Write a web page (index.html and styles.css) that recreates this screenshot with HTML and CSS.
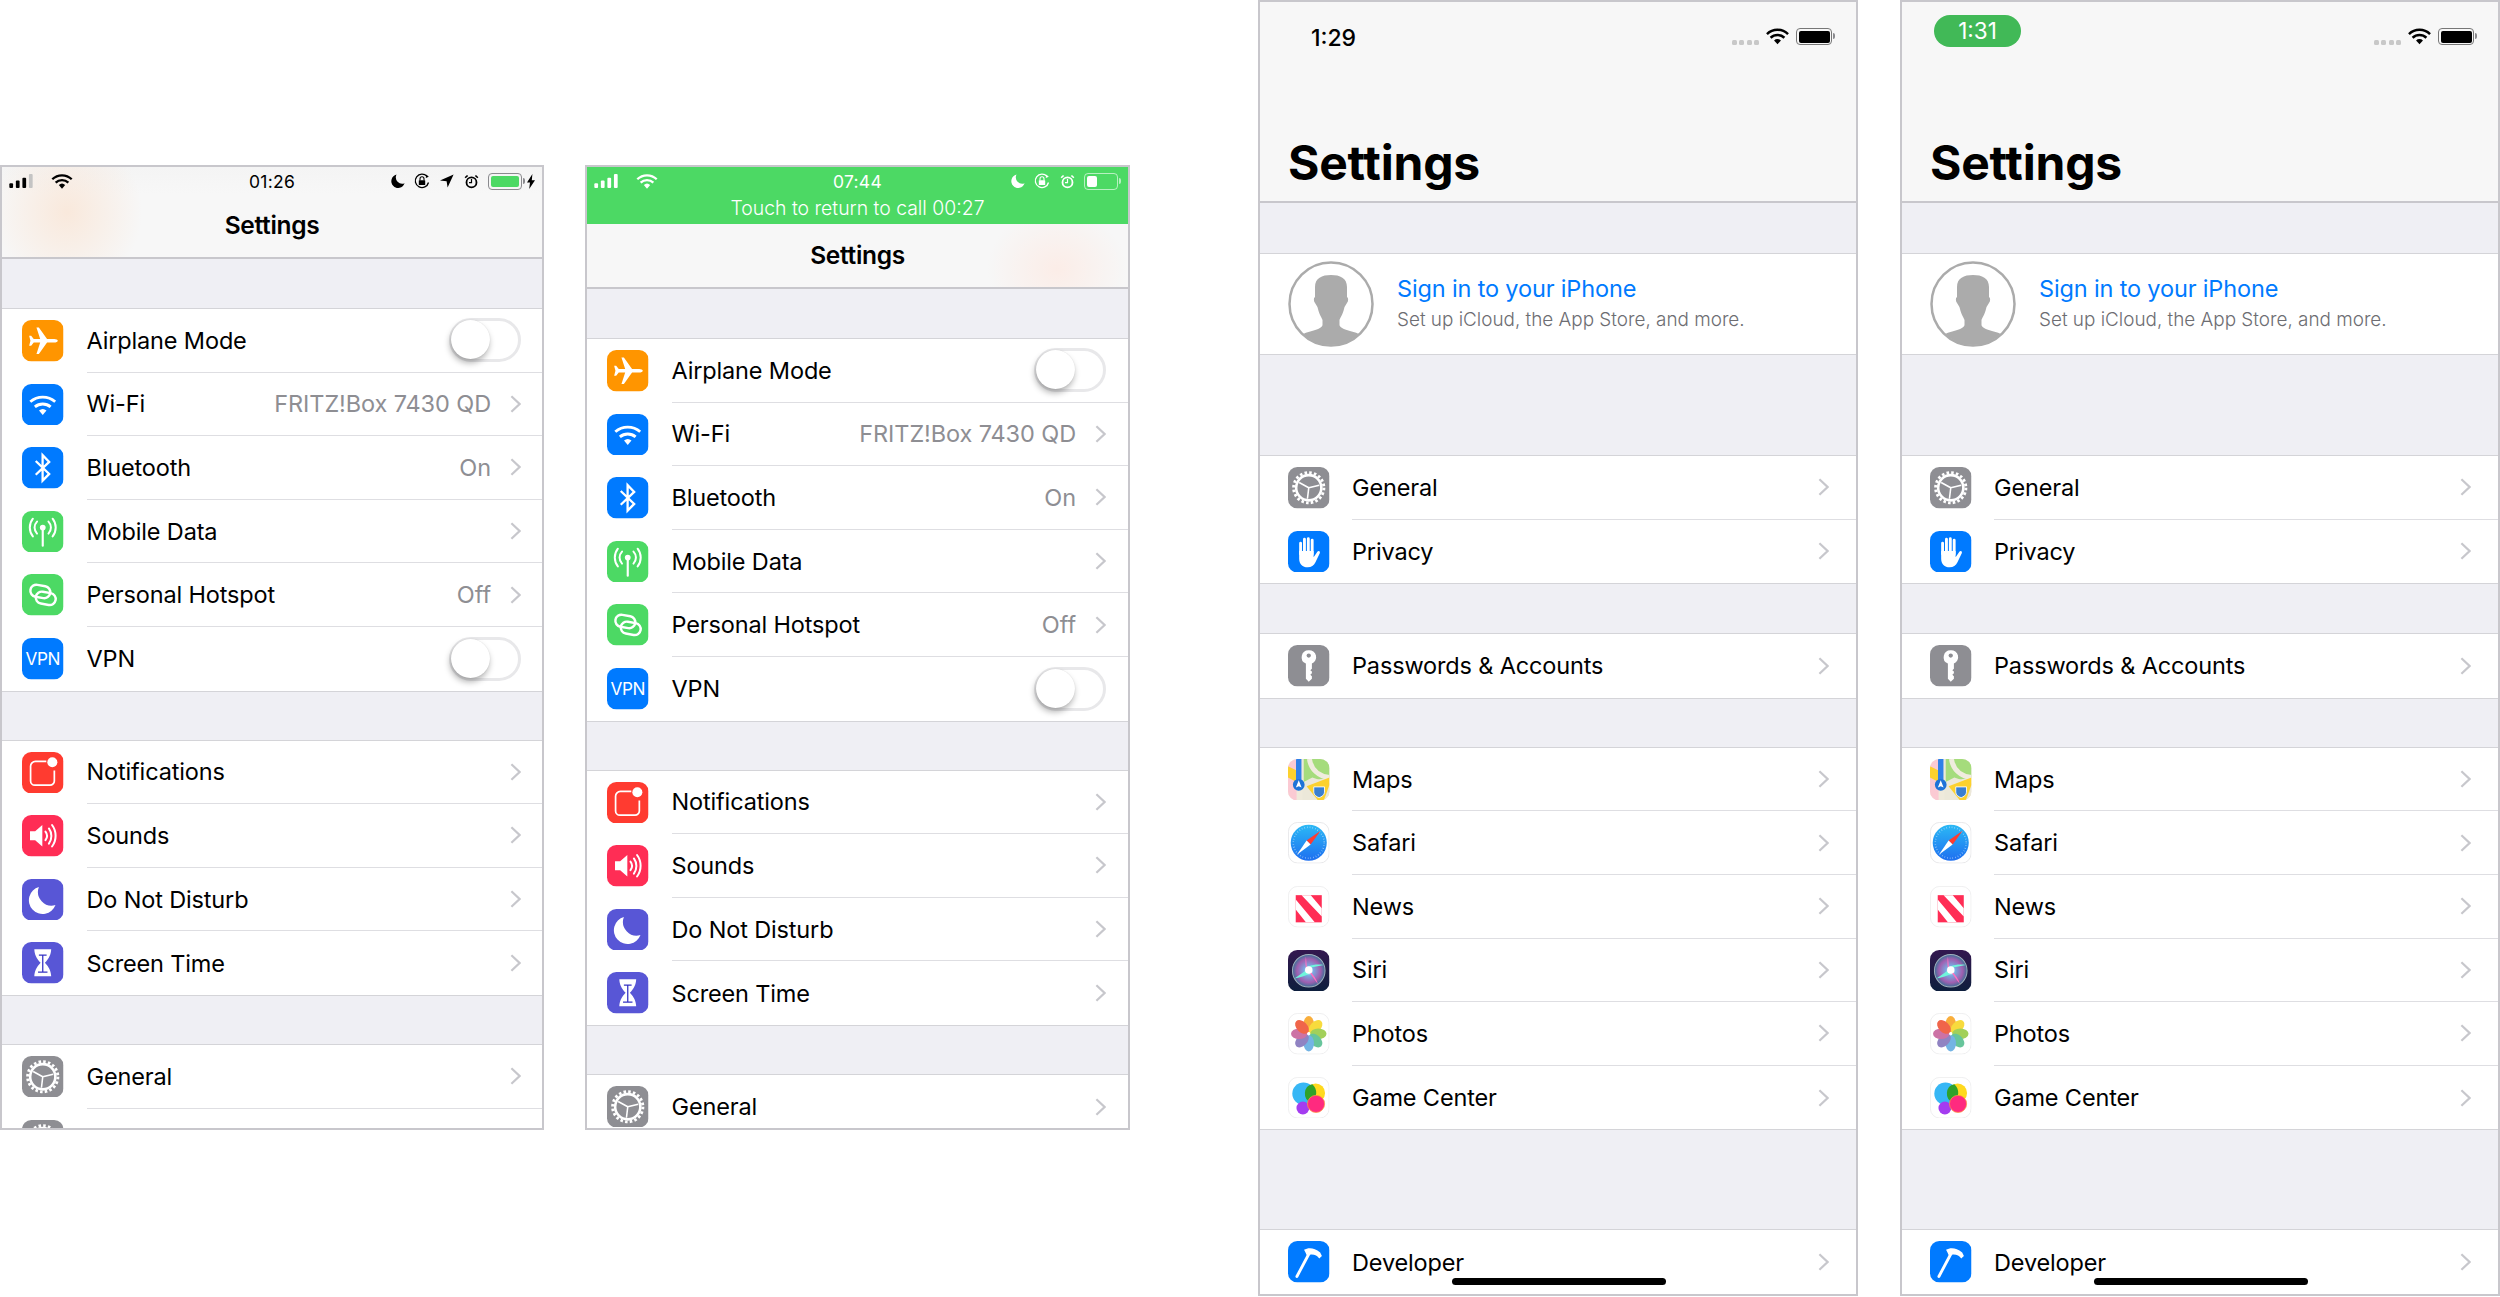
FILE: index.html
```html
<!DOCTYPE html>
<html lang="en">
<head>
    <meta charset="UTF-8">
    <title>iOS Settings screens</title>
    <link rel="stylesheet" href="styles.css">
</head>
<body>
    <svg class="sprites" xmlns="http://www.w3.org/2000/svg">
        <defs>
            <linearGradient id="safariBlue" x1="0" y1="0" x2="0" y2="1">
                <stop offset="0" stop-color="#2bb9f5"/><stop offset="1" stop-color="#1e6ff0"/>
            </linearGradient>
            <radialGradient id="siriGlow" cx="0.5" cy="0.5" r="0.5">
                <stop offset="0" stop-color="#f0fffb"/><stop offset="0.3" stop-color="#7aa8e0"/><stop offset="0.72" stop-color="#a05fb0"/><stop offset="1" stop-color="#3c6f96"/>
            </radialGradient>
            <linearGradient id="siriBg" x1="0" y1="0" x2="0" y2="1">
                <stop offset="0" stop-color="#33174f"/><stop offset="1" stop-color="#0d1f3d"/>
            </linearGradient>
            <clipPath id="tileClip"><rect width="29" height="29" rx="6.5"/></clipPath>
            <clipPath id="avatarClip"><circle cx="43" cy="43" r="41"/></clipPath>
        </defs>

        <!-- status bar -->
        <symbol id="s-signal" viewBox="0 0 25 15">
            <rect x="0" y="10" width="4" height="5" rx="1" fill="currentColor"/>
            <rect x="7" y="7" width="4" height="8" rx="1" fill="currentColor"/>
            <rect x="14" y="4" width="4" height="11" rx="1" fill="currentColor"/>
            <rect x="21" y="0" width="4" height="15" rx="1" fill="currentColor"/>
        </symbol>
        <symbol id="s-signal-dim" viewBox="0 0 25 15">
            <rect x="0" y="10" width="4" height="5" rx="1" fill="currentColor"/>
            <rect x="7" y="7" width="4" height="8" rx="1" fill="currentColor"/>
            <rect x="14" y="4" width="4" height="11" rx="1" fill="currentColor"/>
            <rect x="21" y="0" width="4" height="15" rx="1" fill="#c4c4c4"/>
        </symbol>
        <symbol id="s-wifi" viewBox="0 0 24 17">
            <path d="M1 6a15.800 15.800 0 0 1 22 0M4.800 9.800a10.400 10.400 0 0 1 14.400 0" fill="none" stroke="currentColor" stroke-width="2.600"/>
            <path d="M8.400 12.600a5.200 5.200 0 0 1 7.200 0L12 16.600z" fill="currentColor"/>
        </symbol>
        <symbol id="s-moon" viewBox="0 0 14 14">
            <path d="M5.500.6A6.800 6.800 0 1 0 13.600 9.300 6.400 6.400 0 0 1 5.500.6z" fill="currentColor"/>
        </symbol>
        <symbol id="s-lock" viewBox="0 0 16 16">
            <path d="M14.500 9.500A6.700 6.700 0 1 1 13 3.400" fill="none" stroke="currentColor" stroke-width="1.300"/>
            <path d="M12.200 1.600l2.600 2.200-3 1.300z" fill="currentColor"/>
            <rect x="4.800" y="7.200" width="6.400" height="4.800" rx=".6" fill="currentColor"/>
            <path d="M6 7.400V5.800a2 2 0 0 1 4 0v1.600" fill="none" stroke="currentColor" stroke-width="1.100"/>
        </symbol>
        <symbol id="s-arrow" viewBox="0 0 14 14">
            <path d="M13.600.4L7.600 13.600 6.600 7.200 0 6.400z" fill="currentColor"/>
        </symbol>
        <symbol id="s-alarm" viewBox="0 0 15 15">
            <circle cx="7.500" cy="8.400" r="5" fill="none" stroke="currentColor" stroke-width="1.800"/>
            <path d="M7.500 5v3.600H5" fill="none" stroke="currentColor" stroke-width="1.200"/>
            <path d="M.6 3.200L3 .9l1.200 1L1.700 4.300zM14.400 3.200L12 .9l-1.200 1 2.500 2.400z" fill="currentColor"/>
        </symbol>
        <symbol id="s-bolt" viewBox="0 0 8 15">
            <path d="M5.400 0L0 8.400h3L2.200 15 8 6.200H4.800z" fill="currentColor"/>
        </symbol>

        <!-- list -->
        <symbol id="chev" viewBox="0 0 11 18">
            <path d="M1.400 1.200L9.600 9l-8.200 7.800" fill="none" stroke="#c7c7cc" stroke-width="2.200"/>
        </symbol>

        <symbol id="i-plane" viewBox="0 0 29 29">
            <rect width="29" height="29" rx="6.500" fill="#ff9500"/>
            <path d="M25 14.500c0-.8-1.200-1.300-2.500-1.300h-5L11.800 5.200h-1.700l2.600 8H8.200L6.400 11H5l.9 3.500L5 18h1.400l1.800-2.200h4.500l-2.600 8h1.700l5.700-8h5c1.300 0 2.500-.5 2.500-1.300z" fill="#fff"/>
        </symbol>
        <symbol id="i-wifi" viewBox="0 0 29 29">
            <rect width="29" height="29" rx="6.500" fill="#007aff"/>
            <path d="M5.800 12.400a13.200 13.200 0 0 1 17.400 0M9 16a8.400 8.400 0 0 1 11 0" fill="none" stroke="#fff" stroke-width="2"/>
            <path d="M11.900 18.600a4 4 0 0 1 5.200 0l-2.600 3z" fill="#fff"/>
        </symbol>
        <symbol id="i-bt" viewBox="0 0 29 29">
            <rect width="29" height="29" rx="6.500" fill="#007aff"/>
            <path d="M9.600 9.800l9.400 9-4.600 4.700V5.700l4.600 4.700-9.400 9" fill="none" stroke="#fff" stroke-width="1.600"/>
        </symbol>
        <symbol id="i-data" viewBox="0 0 29 29">
            <rect width="29" height="29" rx="6.500" fill="#4cd964"/>
            <circle cx="14.500" cy="11.600" r="2" fill="#fff"/>
            <path d="M14.500 12v12.200" stroke="#fff" stroke-width="1.500" stroke-linecap="round"/>
            <path d="M10.500 7.400a6 6 0 0 0 0 8.400M7.600 5.400a10 10 0 0 0 0 12.400M18.500 7.400a6 6 0 0 1 0 8.400M21.400 5.400a10 10 0 0 1 0 12.400" fill="none" stroke="#fff" stroke-width="1.400" stroke-linecap="round"/>
        </symbol>
        <symbol id="i-hotspot" viewBox="0 0 29 29">
            <rect width="29" height="29" rx="6.500" fill="#4cd964"/>
            <rect x="5.800" y="8" width="14" height="8.400" rx="4.200" fill="none" stroke="#fff" stroke-width="1.700" transform="rotate(10 12.800 12.200)"/>
            <rect x="9.600" y="12.800" width="14" height="8.400" rx="4.200" fill="none" stroke="#fff" stroke-width="1.700" transform="rotate(10 16.600 17)"/>
        </symbol>
        <symbol id="tile-blue" viewBox="0 0 29 29">
            <rect width="29" height="29" rx="6.500" fill="#007aff"/>
        </symbol>
        <symbol id="i-notif" viewBox="0 0 29 29">
            <rect width="29" height="29" rx="6.500" fill="#ff3b30"/>
            <path d="M17 6.600H9.400a3.400 3.400 0 0 0-3.400 3.400v10.200a3 3 0 0 0 3 3h10.600a3 3 0 0 0 3-3V13" fill="none" stroke="#fff" stroke-width="1.200"/>
            <circle cx="21.200" cy="7.200" r="3.500" fill="#fff"/>
        </symbol>
        <symbol id="i-sound" viewBox="0 0 29 29">
            <rect width="29" height="29" rx="6.500" fill="#ff2d55"/>
            <path d="M5.600 11.400h3.600l5-4.400v15l-5-4.400H5.600z" fill="#fff"/>
            <path d="M16.400 11.600a5 5 0 0 1 0 6M18.800 9.400a9 9 0 0 1 0 10.600M21 7a12.600 12.600 0 0 1 0 15" fill="none" stroke="#fff" stroke-width="1.400" stroke-linecap="round"/>
        </symbol>
        <symbol id="i-moon" viewBox="0 0 29 29">
            <rect width="29" height="29" rx="6.500" fill="#5856d6"/>
            <path d="M11.800 5.600a9.600 9.600 0 1 0 11.600 12.600A9.600 9.600 0 0 1 11.800 5.600z" fill="#fff"/>
        </symbol>
        <symbol id="i-hour" viewBox="0 0 29 29">
            <rect width="29" height="29" rx="6.500" fill="#5856d6"/>
            <path d="M8.600 5h11.800c-.2 3.600-1.400 6.400-4.400 9.500 3 3.100 4.200 5.900 4.400 9.500H8.600c.2-3.600 1.400-6.400 4.400-9.500C10 11.400 8.800 8.600 8.600 5z" fill="#fff"/>
            <path d="M11.800 9.200h5.400M14.500 9.200v11.400M11.200 21h6.600" fill="none" stroke="#3634c4" stroke-width=".9"/>
        </symbol>
        <symbol id="i-gear" viewBox="0 0 29 29">
            <rect width="29" height="29" rx="6.500" fill="#8e8e93"/>
            <circle cx="14.500" cy="14.500" r="8.800" fill="none" stroke="#fff" stroke-width="1.800"/>
            <circle cx="14.500" cy="14.500" r="10.600" fill="none" stroke="#fff" stroke-width="2" stroke-dasharray="1.800 1.530"/>
            <path d="M14.500 14.500L7.800 10.800M14.500 14.500L21.800 12.800M14.500 14.500L13.600 22.200" stroke="#fff" stroke-width="1.100"/>
        </symbol>
        <symbol id="i-hand" viewBox="0 0 29 29">
            <rect width="29" height="29" rx="6.500" fill="#007aff"/>
            <path d="M8.800 8.500V16M11.500 5.800V15M14.200 5.400V15M16.900 6.400V16" stroke="#fff" stroke-width="2" stroke-linecap="round"/>
            <path d="M7.800 14h10.100v4.400l2.500-3.800c.8-1.200 2.400-.4 1.800.9l-3.100 6.500c-1 2.100-2.800 3.400-5.300 3.400-3.700 0-6-2.500-6-6z" fill="#fff"/>
        </symbol>
        <symbol id="i-key" viewBox="0 0 29 29">
            <rect width="29" height="29" rx="6.500" fill="#8e8e93"/>
            <path d="M14.500 3.600a4.900 4.900 0 0 0-2 9.400V23.600l2 2 2.200-2v-1.800l-1.100-1 1.100-1v-1.200l-1.100-1 1.100-1V13a4.900 4.900 0 0 0-2.200-9.400z" fill="#fff"/>
            <circle cx="14.500" cy="7.400" r="1.500" fill="#8e8e93"/>
        </symbol>
        <symbol id="i-maps" viewBox="0 0 29 29">
            <g clip-path="url(#tileClip)">
                <rect width="29" height="29" fill="#efeadb"/>
                <rect x="0" y="0" width="6" height="29" fill="#fbcad3"/>
                <path d="M0 5l6 3v8L0 13z" fill="#fcd12e"/>
                <path d="M10 0h19v29H10z" fill="#ece8d9"/>
                <path d="M11 0v16l18-3V0z" fill="#a5dc7c"/>
                <path d="M15 0c1 7 6 12 14 13" fill="none" stroke="#f0ecde" stroke-width="3.500"/>
                <path d="M11 16l6-3 12 4v12H11z" fill="#ece8d9"/>
                <path d="M13 19l16-6v5l-4 11h-4z" fill="#fcd12e"/>
                <rect x="5.600" y="0" width="3.800" height="20" fill="#2f80e8"/>
                <circle cx="7.500" cy="18" r="4.100" fill="#1f73d8"/>
                <path d="M7.500 14.800l2 5.200-2-1-2 1z" fill="#fff"/>
                <path d="M18 19.500h7.500v3.700c0 2-2 3.200-3.750 3.800-1.750-.6-3.750-1.800-3.750-3.800z" fill="#3a7fd0" stroke="#fff" stroke-width=".6"/>
            </g>
        </symbol>
        <symbol id="i-safari" viewBox="0 0 29 29">
            <rect x=".3" y=".3" width="28.400" height="28.400" rx="6.500" fill="#fff" stroke="#e4e4e6" stroke-width=".6"/>
            <circle cx="14.500" cy="14.500" r="12.600" fill="url(#safariBlue)"/>
            <circle cx="14.500" cy="14.500" r="10.800" fill="none" stroke="#cfe6fb" stroke-width="1.100" stroke-dasharray=".4 1.500" opacity=".8"/>
            <path d="M22.800 6.200L13 13l2.800 2.800z" fill="#ff3b30"/>
            <path d="M6.200 22.800L13 13l2.800 2.800z" fill="#fff"/>
        </symbol>
        <symbol id="i-news" viewBox="0 0 29 29">
            <rect x=".3" y=".3" width="28.400" height="28.400" rx="6.500" fill="#fff" stroke="#ececee" stroke-width=".6"/>
            <rect x="5.400" y="6.400" width="18.200" height="19" fill="#ff2d55"/>
            <path d="M5.400 9.500L18.700 25.400h-6.200L5.400 16.500zM9.500 6.400h6.400L23.600 15.600v5.800z" fill="#fff"/>
        </symbol>
        <symbol id="i-siri" viewBox="0 0 29 29">
            <rect width="29" height="29" rx="6.500" fill="url(#siriBg)"/>
            <circle cx="14.500" cy="14.500" r="11.400" fill="url(#siriGlow)" stroke="#a0aebc" stroke-width=".7"/>
            <path d="M14.500 13L4.500 20c3.500-.6 7-1.800 10-3zM14.500 12.500L25 10.500c-3.500-.6-7.500-.4-10.500 1z" fill="#6ff5dc"/>
            <path d="M13.500 14.500L12.500 4.500c-.5 3.500-.5 7 .5 10zM14 14.500L21 24c-1.200-3.600-3.200-7-6-9.500z" fill="#ff6fc0"/>
            <circle cx="14.500" cy="14" r="2.600" fill="#fff"/>
        </symbol>
        <symbol id="i-photos" viewBox="0 0 29 29">
            <rect x=".3" y=".3" width="28.400" height="28.400" rx="6.500" fill="#fff" stroke="#ececee" stroke-width=".6"/>
            <g opacity=".85">
                <ellipse cx="14.500" cy="7.800" rx="3.700" ry="5.700" fill="#f9a11b"/>
                <ellipse cx="14.500" cy="7.800" rx="3.700" ry="5.700" fill="#f7d51c" transform="rotate(45 14.500 14.500)"/>
                <ellipse cx="14.500" cy="7.800" rx="3.700" ry="5.700" fill="#92c83e" transform="rotate(90 14.500 14.500)"/>
                <ellipse cx="14.500" cy="7.800" rx="3.700" ry="5.700" fill="#4dbb8a" transform="rotate(135 14.500 14.500)"/>
                <ellipse cx="14.500" cy="7.800" rx="3.700" ry="5.700" fill="#5ba7e0" transform="rotate(180 14.500 14.500)"/>
                <ellipse cx="14.500" cy="7.800" rx="3.700" ry="5.700" fill="#7d6eb8" transform="rotate(225 14.500 14.500)"/>
                <ellipse cx="14.500" cy="7.800" rx="3.700" ry="5.700" fill="#c45a96" transform="rotate(270 14.500 14.500)"/>
                <ellipse cx="14.500" cy="7.800" rx="3.700" ry="5.700" fill="#ee4b2b" transform="rotate(315 14.500 14.500)"/>
            </g>
            <circle cx="14.500" cy="14.500" r="1" fill="#fff"/>
        </symbol>
        <symbol id="i-game" viewBox="0 0 29 29">
            <rect x=".3" y=".3" width="28.400" height="28.400" rx="6.500" fill="#fff" stroke="#ececee" stroke-width=".6"/>
            <circle cx="19.300" cy="11.200" r="6.600" fill="#ffd91e"/>
            <circle cx="10.800" cy="11.600" r="7.800" fill="#37b7f5"/>
            <path d="M17 5a6.600 6.600 0 0 0-1 12.600 7.800 7.800 0 0 0 1-12.600z" fill="#2fa12a"/>
            <circle cx="10.400" cy="21.700" r="4.500" fill="#a43cf0"/>
            <circle cx="19.600" cy="18.800" r="6" fill="#ff2a7f" stroke="#ff9a3c" stroke-width=".5"/>
        </symbol>
        <symbol id="i-dev" viewBox="0 0 29 29">
            <rect width="29" height="29" rx="6.500" fill="#007aff"/>
            <path d="M6.200 24.800L15.400 7.500" stroke="#fff" stroke-width="2" stroke-linecap="round"/>
            <path d="M11.200 6.200c3-1.800 7-1.700 11.300 1.800l1.200 2.400-1.900 1.800c-1.400-2-3.500-3-6.600-2.600l-1.600 1.400c-.8-1.600-1.400-3-2.400-4.800z" fill="#fff"/>
        </symbol>
        <symbol id="avatar" viewBox="0 0 86 86">
            <circle cx="43" cy="43" r="41.500" fill="#fff" stroke="#ababab" stroke-width="2.500"/>
            <path clip-path="url(#avatarClip)" d="M43 14c-9 0-16 3-16 12v10c-1.500 1-1.500 4 0 6 1 2 2.500 3 3 6 1 5 4 9 4.500 11v5c0 3-7 5-14 7-4 1-6 2-8 5v12h61V76c-2-3-4-4-8-5-7-2-14-4-14-7v-5c.5-2 3.500-6 4.500-11 .5-3 2-4 3-6 1.500-2 1.500-5 0-6V26c0-9-7-12-16-12z" fill="#ababab"/>
        </symbol>
    </svg>

    <div class="shots">

        <section class="phone small p1">
            <div class="head">
                <div class="statusbar">
                    <div class="status-left">
                        <svg class="st-signal"><use href="#s-signal-dim"/></svg>
                        <svg class="st-wifi"><use href="#s-wifi"/></svg>
                    </div>
                    <div class="status-time">01:26</div>
                    <div class="status-right">
                        <svg class="st-moon"><use href="#s-moon"/></svg>
                        <svg class="st-lock"><use href="#s-lock"/></svg>
                        <svg class="st-arrow"><use href="#s-arrow"/></svg>
                        <svg class="st-alarm"><use href="#s-alarm"/></svg>
                        <span class="battery charging"><span class="battery-fill full"></span></span>
                        <svg class="st-bolt"><use href="#s-bolt"/></svg>
                    </div>
                </div>
                <div class="navbar">Settings</div>
            </div>

            <div class="group">
                <div class="row"><svg class="icon"><use href="#i-plane"/></svg><div class="row-body"><span class="label">Airplane Mode</span><span class="toggle"></span></div></div>
                <div class="row"><svg class="icon"><use href="#i-wifi"/></svg><div class="row-body"><span class="label">Wi-Fi</span><span class="value">FRITZ!Box 7430 QD</span><svg class="chev"><use href="#chev"/></svg></div></div>
                <div class="row"><svg class="icon"><use href="#i-bt"/></svg><div class="row-body"><span class="label">Bluetooth</span><span class="value">On</span><svg class="chev"><use href="#chev"/></svg></div></div>
                <div class="row"><svg class="icon"><use href="#i-data"/></svg><div class="row-body"><span class="label">Mobile Data</span><svg class="chev"><use href="#chev"/></svg></div></div>
                <div class="row"><svg class="icon"><use href="#i-hotspot"/></svg><div class="row-body"><span class="label">Personal Hotspot</span><span class="value">Off</span><svg class="chev"><use href="#chev"/></svg></div></div>
                <div class="row"><svg class="icon" viewBox="0 0 29 29"><use href="#tile-blue" width="29" height="29"/><text x="14.500" y="18.800" text-anchor="middle" class="vpn-text">VPN</text></svg><div class="row-body"><span class="label">VPN</span><span class="toggle"></span></div></div>
            </div>
            <div class="group">
                <div class="row"><svg class="icon"><use href="#i-notif"/></svg><div class="row-body"><span class="label">Notifications</span><svg class="chev"><use href="#chev"/></svg></div></div>
                <div class="row"><svg class="icon"><use href="#i-sound"/></svg><div class="row-body"><span class="label">Sounds</span><svg class="chev"><use href="#chev"/></svg></div></div>
                <div class="row"><svg class="icon"><use href="#i-moon"/></svg><div class="row-body"><span class="label">Do Not Disturb</span><svg class="chev"><use href="#chev"/></svg></div></div>
                <div class="row"><svg class="icon"><use href="#i-hour"/></svg><div class="row-body"><span class="label">Screen Time</span><svg class="chev"><use href="#chev"/></svg></div></div>
            </div>
            <div class="group">
                <div class="row"><svg class="icon"><use href="#i-gear"/></svg><div class="row-body"><span class="label">General</span><svg class="chev"><use href="#chev"/></svg></div></div>
                <div class="row"><svg class="icon"><use href="#i-gear"/></svg><div class="row-body"></div></div>
            </div>
        </section>

        <section class="phone small p2">
            <div class="head">
                <div class="callbar">
                    <div class="statusbar">
                        <div class="status-left">
                            <svg class="st-signal"><use href="#s-signal"/></svg>
                            <svg class="st-wifi"><use href="#s-wifi"/></svg>
                        </div>
                        <div class="status-time">07:44</div>
                        <div class="status-right">
                            <svg class="st-moon"><use href="#s-moon"/></svg>
                            <svg class="st-lock"><use href="#s-lock"/></svg>
                            <svg class="st-alarm"><use href="#s-alarm"/></svg>
                            <span class="battery outline"><span class="battery-fill low"></span></span>
                        </div>
                    </div>
                    <div class="call-text">Touch to return to call 00:27</div>
                </div>
                <div class="navbar">Settings</div>
            </div>

            <div class="group">
                <div class="row"><svg class="icon"><use href="#i-plane"/></svg><div class="row-body"><span class="label">Airplane Mode</span><span class="toggle"></span></div></div>
                <div class="row"><svg class="icon"><use href="#i-wifi"/></svg><div class="row-body"><span class="label">Wi-Fi</span><span class="value">FRITZ!Box 7430 QD</span><svg class="chev"><use href="#chev"/></svg></div></div>
                <div class="row"><svg class="icon"><use href="#i-bt"/></svg><div class="row-body"><span class="label">Bluetooth</span><span class="value">On</span><svg class="chev"><use href="#chev"/></svg></div></div>
                <div class="row"><svg class="icon"><use href="#i-data"/></svg><div class="row-body"><span class="label">Mobile Data</span><svg class="chev"><use href="#chev"/></svg></div></div>
                <div class="row"><svg class="icon"><use href="#i-hotspot"/></svg><div class="row-body"><span class="label">Personal Hotspot</span><span class="value">Off</span><svg class="chev"><use href="#chev"/></svg></div></div>
                <div class="row"><svg class="icon" viewBox="0 0 29 29"><use href="#tile-blue" width="29" height="29"/><text x="14.500" y="18.800" text-anchor="middle" class="vpn-text">VPN</text></svg><div class="row-body"><span class="label">VPN</span><span class="toggle"></span></div></div>
            </div>
            <div class="group">
                <div class="row"><svg class="icon"><use href="#i-notif"/></svg><div class="row-body"><span class="label">Notifications</span><svg class="chev"><use href="#chev"/></svg></div></div>
                <div class="row"><svg class="icon"><use href="#i-sound"/></svg><div class="row-body"><span class="label">Sounds</span><svg class="chev"><use href="#chev"/></svg></div></div>
                <div class="row"><svg class="icon"><use href="#i-moon"/></svg><div class="row-body"><span class="label">Do Not Disturb</span><svg class="chev"><use href="#chev"/></svg></div></div>
                <div class="row"><svg class="icon"><use href="#i-hour"/></svg><div class="row-body"><span class="label">Screen Time</span><svg class="chev"><use href="#chev"/></svg></div></div>
            </div>
            <div class="group">
                <div class="row"><svg class="icon"><use href="#i-gear"/></svg><div class="row-body"><span class="label">General</span><svg class="chev"><use href="#chev"/></svg></div></div>
            </div>
        </section>

        <section class="phone large p3">
            <div class="x-status">
                <div class="x-time">1:29</div>
                <div class="x-right">
                    <span class="dots"><i></i><i></i><i></i><i></i></span>
                    <svg class="x-wifi"><use href="#s-wifi"/></svg>
                    <span class="battery solid"><span class="battery-fill full"></span></span>
                </div>
            </div>
            <div class="large-title">Settings</div>

            <div class="group">
                <div class="account">
                    <svg class="avatar"><use href="#avatar"/></svg>
                    <div class="account-text">
                        <div class="sign-in">Sign in to your iPhone</div>
                        <div class="sign-sub">Set up iCloud, the App Store, and more.</div>
                    </div>
                </div>
            </div>
            <div class="group wide">
                <div class="row"><svg class="icon"><use href="#i-gear"/></svg><div class="row-body"><span class="label">General</span><svg class="chev"><use href="#chev"/></svg></div></div>
                <div class="row"><svg class="icon"><use href="#i-hand"/></svg><div class="row-body"><span class="label">Privacy</span><svg class="chev"><use href="#chev"/></svg></div></div>
            </div>
            <div class="group">
                <div class="row"><svg class="icon"><use href="#i-key"/></svg><div class="row-body"><span class="label">Passwords &amp; Accounts</span><svg class="chev"><use href="#chev"/></svg></div></div>
            </div>
            <div class="group">
                <div class="row"><svg class="icon"><use href="#i-maps"/></svg><div class="row-body"><span class="label">Maps</span><svg class="chev"><use href="#chev"/></svg></div></div>
                <div class="row"><svg class="icon"><use href="#i-safari"/></svg><div class="row-body"><span class="label">Safari</span><svg class="chev"><use href="#chev"/></svg></div></div>
                <div class="row"><svg class="icon"><use href="#i-news"/></svg><div class="row-body"><span class="label">News</span><svg class="chev"><use href="#chev"/></svg></div></div>
                <div class="row"><svg class="icon"><use href="#i-siri"/></svg><div class="row-body"><span class="label">Siri</span><svg class="chev"><use href="#chev"/></svg></div></div>
                <div class="row"><svg class="icon"><use href="#i-photos"/></svg><div class="row-body"><span class="label">Photos</span><svg class="chev"><use href="#chev"/></svg></div></div>
                <div class="row"><svg class="icon"><use href="#i-game"/></svg><div class="row-body"><span class="label">Game Center</span><svg class="chev"><use href="#chev"/></svg></div></div>
            </div>
            <div class="group tail">
                <div class="row"><svg class="icon"><use href="#i-dev"/></svg><div class="row-body"><span class="label">Developer</span><svg class="chev"><use href="#chev"/></svg></div></div>
            </div>
            <div class="home-bar"></div>
        </section>

        <section class="phone large p4">
            <div class="x-status">
                <div class="x-time pill">1:31</div>
                <div class="x-right">
                    <span class="dots"><i></i><i></i><i></i><i></i></span>
                    <svg class="x-wifi"><use href="#s-wifi"/></svg>
                    <span class="battery solid"><span class="battery-fill full"></span></span>
                </div>
            </div>
            <div class="large-title">Settings</div>

            <div class="group">
                <div class="account">
                    <svg class="avatar"><use href="#avatar"/></svg>
                    <div class="account-text">
                        <div class="sign-in">Sign in to your iPhone</div>
                        <div class="sign-sub">Set up iCloud, the App Store, and more.</div>
                    </div>
                </div>
            </div>
            <div class="group wide">
                <div class="row"><svg class="icon"><use href="#i-gear"/></svg><div class="row-body"><span class="label">General</span><svg class="chev"><use href="#chev"/></svg></div></div>
                <div class="row"><svg class="icon"><use href="#i-hand"/></svg><div class="row-body"><span class="label">Privacy</span><svg class="chev"><use href="#chev"/></svg></div></div>
            </div>
            <div class="group">
                <div class="row"><svg class="icon"><use href="#i-key"/></svg><div class="row-body"><span class="label">Passwords &amp; Accounts</span><svg class="chev"><use href="#chev"/></svg></div></div>
            </div>
            <div class="group">
                <div class="row"><svg class="icon"><use href="#i-maps"/></svg><div class="row-body"><span class="label">Maps</span><svg class="chev"><use href="#chev"/></svg></div></div>
                <div class="row"><svg class="icon"><use href="#i-safari"/></svg><div class="row-body"><span class="label">Safari</span><svg class="chev"><use href="#chev"/></svg></div></div>
                <div class="row"><svg class="icon"><use href="#i-news"/></svg><div class="row-body"><span class="label">News</span><svg class="chev"><use href="#chev"/></svg></div></div>
                <div class="row"><svg class="icon"><use href="#i-siri"/></svg><div class="row-body"><span class="label">Siri</span><svg class="chev"><use href="#chev"/></svg></div></div>
                <div class="row"><svg class="icon"><use href="#i-photos"/></svg><div class="row-body"><span class="label">Photos</span><svg class="chev"><use href="#chev"/></svg></div></div>
                <div class="row"><svg class="icon"><use href="#i-game"/></svg><div class="row-body"><span class="label">Game Center</span><svg class="chev"><use href="#chev"/></svg></div></div>
            </div>
            <div class="group tail">
                <div class="row"><svg class="icon"><use href="#i-dev"/></svg><div class="row-body"><span class="label">Developer</span><svg class="chev"><use href="#chev"/></svg></div></div>
            </div>
            <div class="home-bar"></div>
        </section>

    </div>
</body>
</html>
```

FILE: styles.css
```css
body {
    margin: 0;
    background-color: #fff;
    font-family: Inter, "Liberation Sans", sans-serif;
    color: #000;
    overflow: hidden;
}
.sprites {
    display: block;
    width: 0;
    height: 0;
}
.vpn-text {
    font-family: Inter, sans-serif;
    font-size: 12px;
    fill: #fff;
    letter-spacing: -0.3px;
}

.shots {
    display: flex;
    align-items: flex-start;
    width: 2500px;
}
.phone {
    position: relative;
    flex: none;
    box-sizing: border-box;
    border: 2px solid #c8c7cc;
    background-color: #efeff4;
    overflow: hidden;
}
.small { --pad: 20px; height: 965px; margin-top: 165px; }
.large { --pad: 28px; height: 1296px; }
.p1 { width: 544px; }
.p2 { width: 545px; margin-left: 41px; }
.p3 { width: 600px; margin-left: 128px; }
.p4 { width: 600px; margin-left: 42px; }

/* old style status bar */
.statusbar {
    display: grid;
    grid-template-columns: 1fr auto 1fr;
    align-items: center;
    height: 28px;
    padding: 0 7px 0 7px;
    font-size: 17.5px;
}
.status-left, .status-right {
    display: flex;
    align-items: center;
}
.status-right { justify-content: flex-end; }
.status-time { letter-spacing: 0.3px; }
.st-signal { width: 24px; height: 14px; }
.st-wifi { width: 22px; height: 15px; margin-left: 18px; }
.st-moon { width: 14px; height: 14px; }
.st-lock { width: 16px; height: 16px; margin-left: 9px; }
.st-arrow { width: 14px; height: 14px; margin-left: 10px; }
.st-alarm { width: 15px; height: 15px; margin-left: 10px; }
.st-bolt { width: 8px; height: 15px; margin-left: 5px; }

.battery {
    position: relative;
    display: block;
    box-sizing: border-box;
    width: 34px;
    height: 17px;
    margin-left: 9px;
    padding: 2px;
    border: 1px solid #8a8a8e;
    border-radius: 4px;
}
.battery::after {
    content: "";
    position: absolute;
    top: 4px;
    right: -4px;
    width: 2px;
    height: 6px;
    border-radius: 0 2px 2px 0;
    background-color: #8a8a8e;
}
.battery-fill {
    display: block;
    height: 100%;
    border-radius: 2px;
}
.battery-fill.full { width: 100%; }
.battery-fill.low { width: 36%; background-color: #fff; }
.charging .battery-fill { background-color: #4cd964; }
.outline { border-color: rgba(255, 255, 255, 0.6); margin-right: 3px; }
.outline::after { background-color: rgba(255, 255, 255, 0.6); }
.solid { width: 36px; height: 17px; margin-left: 7px; border-color: #777; padding: 1.5px; }
.solid .battery-fill { background-color: #000; }

.callbar {
    height: 57px;
    background-color: #4cd964;
    color: #fff;
}
.call-text {
    text-align: center;
    font-size: 19.4px;
    font-weight: 300;
    line-height: 27px;
}

.navbar {
    text-align: center;
    font-size: 24.5px;
    font-weight: 600;
    letter-spacing: -0.3px;
    border-bottom: 2px solid #c8c7cc;
}
.p1 .head {
    background: radial-gradient(ellipse 75px 80px at 65px 45px, rgba(250, 225, 205, 0.65), rgba(247, 247, 247, 0)), linear-gradient(#f4f4f4, #f7f7f7 30%);
}
.p1 .navbar { height: 62px; line-height: 61px; }
.p2 .navbar {
    height: 63px;
    line-height: 62px;
    background: radial-gradient(ellipse 70px 60px at 470px 45px, rgba(255, 228, 218, 0.55), rgba(247, 247, 247, 0)), #f7f7f7;
}

/* notch style header */
.x-status {
    display: flex;
    justify-content: space-between;
    height: 90px;
    padding: 0 24px 0 30px;
    background-color: #f7f7f7;
}
.p4 .x-status { padding-left: 32px; }
.x-time {
    width: 87px;
    height: 32px;
    margin-top: 20px;
    line-height: 32px;
    text-align: center;
    font-size: 23px;
    font-weight: 500;
}
.x-time.pill {
    margin-top: 13px;
    border-radius: 16px;
    background-color: #41b957;
    color: #fff;
    font-size: 22.5px;
    font-weight: 400;
}
.x-right {
    display: flex;
    align-items: flex-start;
    padding-top: 26px;
}
.dots {
    display: flex;
    gap: 2.5px;
    margin-top: 12px;
}
.dots i {
    display: block;
    width: 5px;
    height: 5px;
    border-radius: 1.5px;
    background-color: #c8c8c8;
}
.x-wifi { width: 23px; height: 17px; margin-left: 7px; }
.large-title {
    height: 66px;
    padding: 43px 0 0 28px;
    line-height: 56px;
    font-size: 48px;
    font-weight: 700;
    letter-spacing: -0.2px;
    border-bottom: 2px solid #c8c7cc;
    background-color: #f7f7f7;
}

/* lists */
.group {
    margin-top: 48px;
    border-top: 1px solid #d4d4d8;
    border-bottom: 1px solid #d4d4d8;
    background-color: #fff;
}
.head + .group { margin-top: 49px; }
.large-title + .group { margin-top: 50px; }
.group.wide { margin-top: 100px; }
.wide + .group { margin-top: 49px; }
.group.tail { margin-top: 99px; }
.row {
    display: flex;
    align-items: center;
    height: 63.6px;
    padding-left: var(--pad);
}
.icon {
    flex: none;
    width: 41.5px;
    height: 41.5px;
}
.row-body {
    flex: 1;
    display: flex;
    align-items: center;
    align-self: stretch;
    box-sizing: border-box;
    margin-left: 23px;
    padding-right: calc(var(--pad) - 1px);
    border-bottom: 1px solid #dedee2;
}
.large .row-body { margin-left: 22.5px; }
.p1 .row-body { padding-right: 21px; }
.p2 .row-body { padding-right: 22px; }
.row:last-child .row-body { border-bottom: none; }
.label {
    flex: 1;
    font-size: 23.5px;
    letter-spacing: -0.15px;
}
.value {
    font-size: 23.5px;
    letter-spacing: -0.1px;
    color: #8e8e93;
}
.chev {
    flex: none;
    width: 11px;
    height: 18px;
    margin-left: 19px;
}
.toggle {
    position: relative;
    flex: none;
    box-sizing: border-box;
    width: 72px;
    height: 44px;
    border: 3px solid #e8e8ea;
    border-radius: 22px;
}
.toggle::after {
    content: "";
    position: absolute;
    top: -1px;
    left: -1px;
    width: 39px;
    height: 39px;
    border-radius: 50%;
    background-color: #fff;
    box-shadow: -1px 4px 6px rgba(0, 0, 0, 0.3), 0 0 1px rgba(0, 0, 0, 0.15);
}

.account {
    display: flex;
    align-items: center;
    height: 100px;
    padding-left: var(--pad);
}
.avatar { flex: none; width: 86px; height: 86px; }
.account-text { margin: -4px 0 0 23px; }
.sign-in {
    font-size: 23.5px;
    letter-spacing: -0.15px;
    color: #007aff;
}
.sign-sub {
    margin-top: 5px;
    font-size: 18.9px;
    font-weight: 300;
    color: #6d6d72;
}
.home-bar {
    position: absolute;
    left: 192px;
    bottom: 9px;
    width: 214px;
    height: 7px;
    border-radius: 4px;
    background-color: #000;
}
```
